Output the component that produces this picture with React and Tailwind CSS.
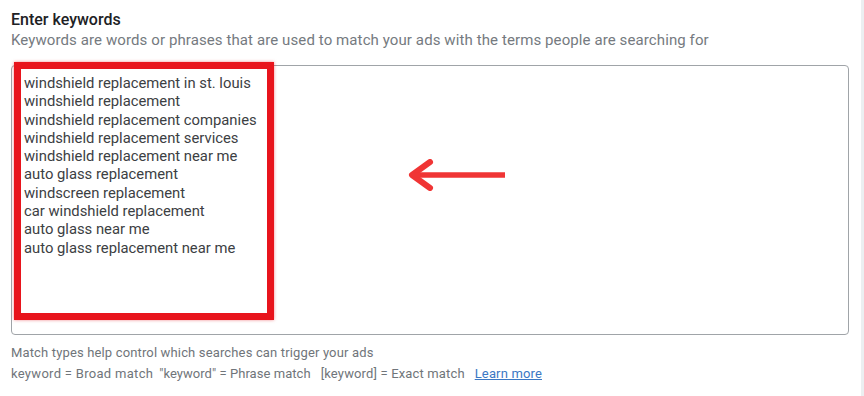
import React from 'react';

const keywords = [
  'windshield replacement in st. louis',
  'windshield replacement',
  'windshield replacement companies',
  'windshield replacement services',
  'windshield replacement near me',
  'auto glass replacement',
  'windscreen replacement',
  'car windshield replacement',
  'auto glass near me',
  'auto glass replacement near me',
];

export default function App() {
  return (
    <div className="w-[864px] h-[396px] bg-white flex overflow-hidden" style={{ fontFamily: 'Roboto, "Liberation Sans", sans-serif' }}>
      <div className="flex-1 pl-[11px] pr-[12px] pt-[10px]">
        <h3 className="text-[16px] leading-[20px] font-medium text-[#202124]">Enter keywords</h3>
        <p className="text-[15px] leading-[21px] tracking-[0.1px] text-[#757a80]">
          Keywords are words or phrases that are used to match your ads with the terms people are searching for
        </p>

        <div className="relative mt-[14px] h-[270px] border border-[#a0a4a8] rounded-[4px] pt-[8px] pl-[12px]">
          <div className="text-[14.8px] leading-[18.3px] text-[#3c4043]">
            {keywords.map((k) => (
              <div key={k}>{k}</div>
            ))}
          </div>

          {/* annotation overlay */}
          <div className="absolute left-[2px] top-[-4px] w-[260px] h-[258px] border-[7px] border-[#e8141c] shadow-[0_0_3px_rgba(232,20,28,0.5)]" />
          <svg className="absolute left-[396px] top-[93px]" width="100" height="32" viewBox="0 0 100 32">
            <path d="M22 3 L4 16 L22 29" fill="none" stroke="#f03535" strokeWidth="6" strokeLinecap="round" strokeLinejoin="round" />
            <path d="M5 16 H97" fill="none" stroke="#f03535" strokeWidth="5.5" />
          </svg>
        </div>

        <div className="mt-[7px] text-[13px] leading-[21px] tracking-[0.15px] text-[#70757a]">
          <p>Match types help control which searches can trigger your ads</p>
          <p className="flex">
            <span className="tracking-[0.3px]">keyword = Broad match</span>
            <span className="ml-[6px] tracking-[0.05px]">"keyword" = Phrase match</span>
            <span className="ml-[10px]">[keyword] = Exact match</span>
            <a className="ml-[10px] text-[#3b78c4] underline">Learn more</a>
          </p>
        </div>
      </div>
      <div className="w-[3px] bg-[#eceff1]" />
    </div>
  );
}
